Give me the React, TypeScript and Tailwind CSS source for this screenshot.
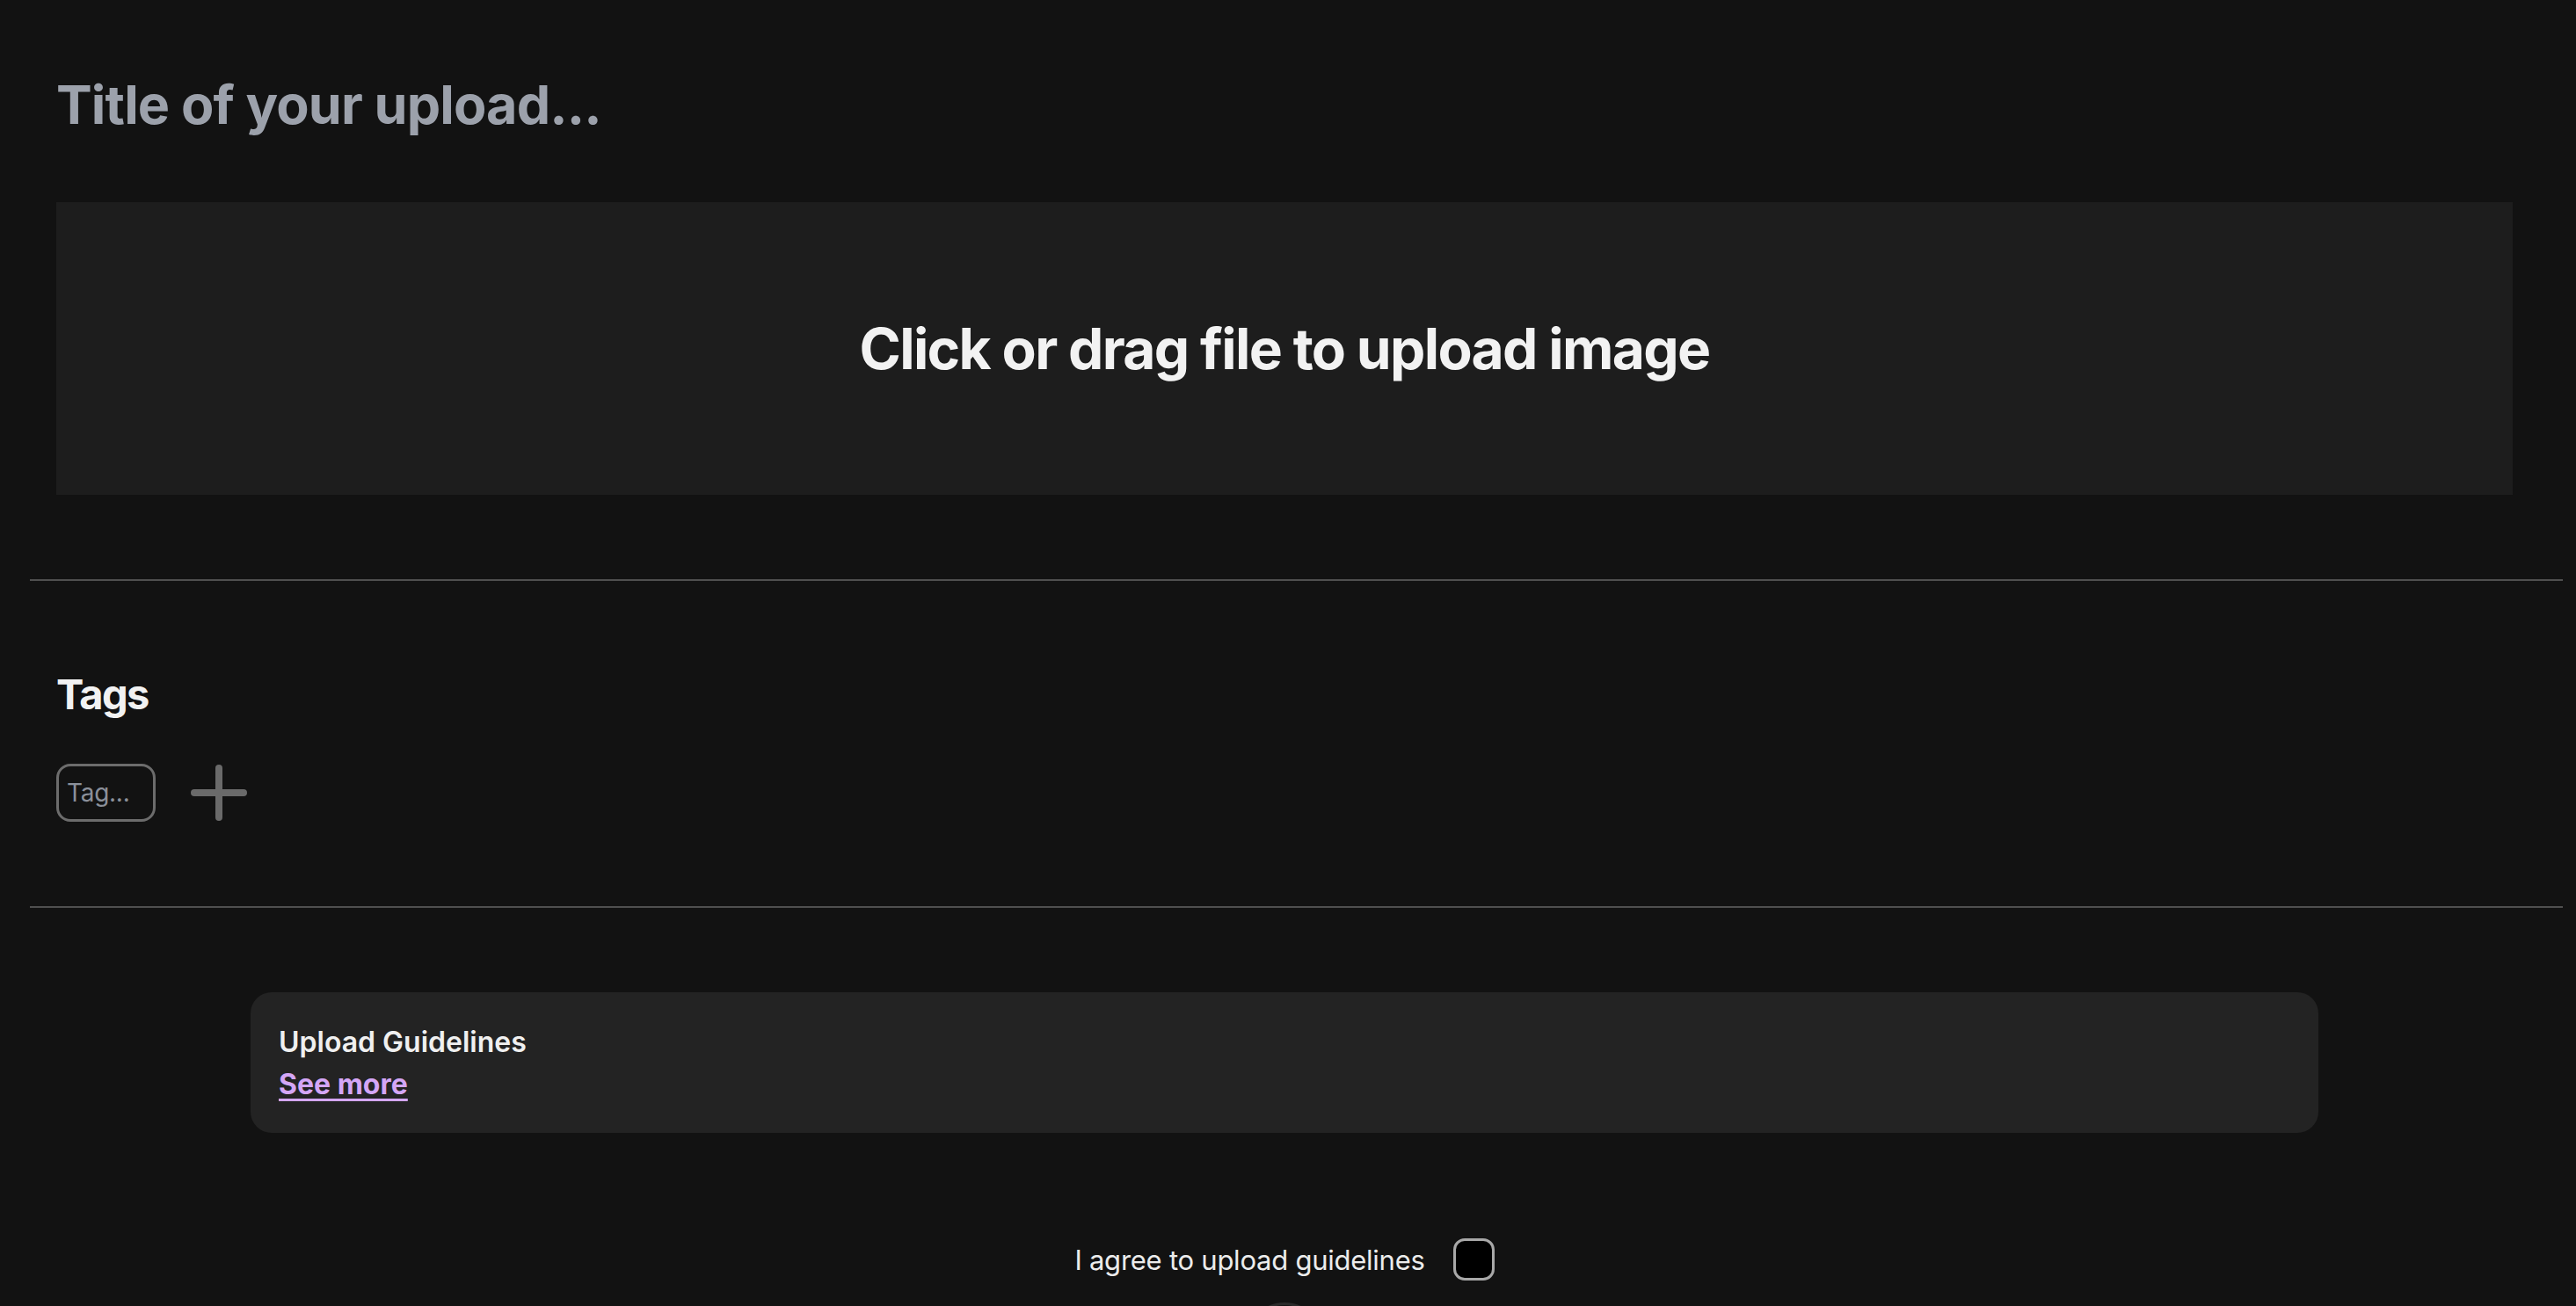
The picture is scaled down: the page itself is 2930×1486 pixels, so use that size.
import React from "react";

export default function App() {
  return (
    <div
      className="h-[1486px] w-full overflow-hidden bg-[#121212] pl-[34px] pr-[15px]"
      style={{ fontFamily: "Inter, 'Noto Sans', sans-serif" }}
    >
      {/* Title + dropzone */}
      <div className="pl-[30px] pr-[57px] pt-[83px]">
        <h1 className="text-[61px] font-bold leading-[72px] tracking-[-0.014em] text-[#9ca1ab]">
          Title of your upload...
        </h1>
        <div className="mt-[75px] flex h-[333px] items-center justify-center bg-[#1d1d1d]">
          <span className="text-[64px] font-bold leading-none tracking-[-0.026em] text-[#f2f2f2]">
            Click or drag file to upload image
          </span>
        </div>
      </div>

      <div className="mt-[96px] h-[2px] bg-[#4f4f4f]" />

      {/* Tags */}
      <div className="pl-[30px] pr-[57px] pt-[105px]">
        <h2 className="text-[47px] font-bold leading-[48px] tracking-[-0.035em] text-[#f2f2f2]">Tags</h2>
        <div className="mt-[55px] flex items-center gap-[40px]">
          <div className="flex h-[66px] w-[113px] items-center rounded-[16px] border-[3px] border-[#6c6c6c] pl-[9px]">
            <span className="text-[28px] leading-none tracking-[-0.01em] text-[#8b909a]">Tag...</span>
          </div>
          <svg width="64" height="64" viewBox="0 0 64 64" className="block">
            <line x1="32" y1="4" x2="32" y2="60" stroke="#6a6a6a" strokeWidth="8" strokeLinecap="round" />
            <line x1="4" y1="32" x2="60" y2="32" stroke="#6a6a6a" strokeWidth="8" strokeLinecap="round" />
          </svg>
        </div>
      </div>

      <div className="mt-[96px] h-[2px] bg-[#4f4f4f]" />

      {/* Guidelines + agree */}
      <div className="flex flex-col items-center pl-[30px] pr-[57px] pt-[96px]">
        <div className="h-[160px] w-[2352px] rounded-[24px] bg-[#232323] pl-[32px] pt-[33px]">
          <div className="text-[32px] font-semibold leading-[48px] text-[#f0f0f0]">
            Upload Guidelines
          </div>
          <a className="block w-fit text-[32px] font-bold leading-[48px] text-[#d4a6f6] underline decoration-[3px] underline-offset-[5px]">
            See more
          </a>
        </div>

        <div className="mt-[120px] flex items-center gap-[32px]">
          <span className="text-[31px] leading-none tracking-[-0.008em] text-[#ececec]">I agree to upload guidelines</span>
          <div className="h-[48px] w-[47px] rounded-[13px] border-[3px] border-[#a8a8a8] bg-black" />
        </div>

        <div className="mt-[25px] h-[88px] w-[88px] rounded-full border-[3px] border-[#2a2a2a]" />
      </div>
    </div>
  );
}
